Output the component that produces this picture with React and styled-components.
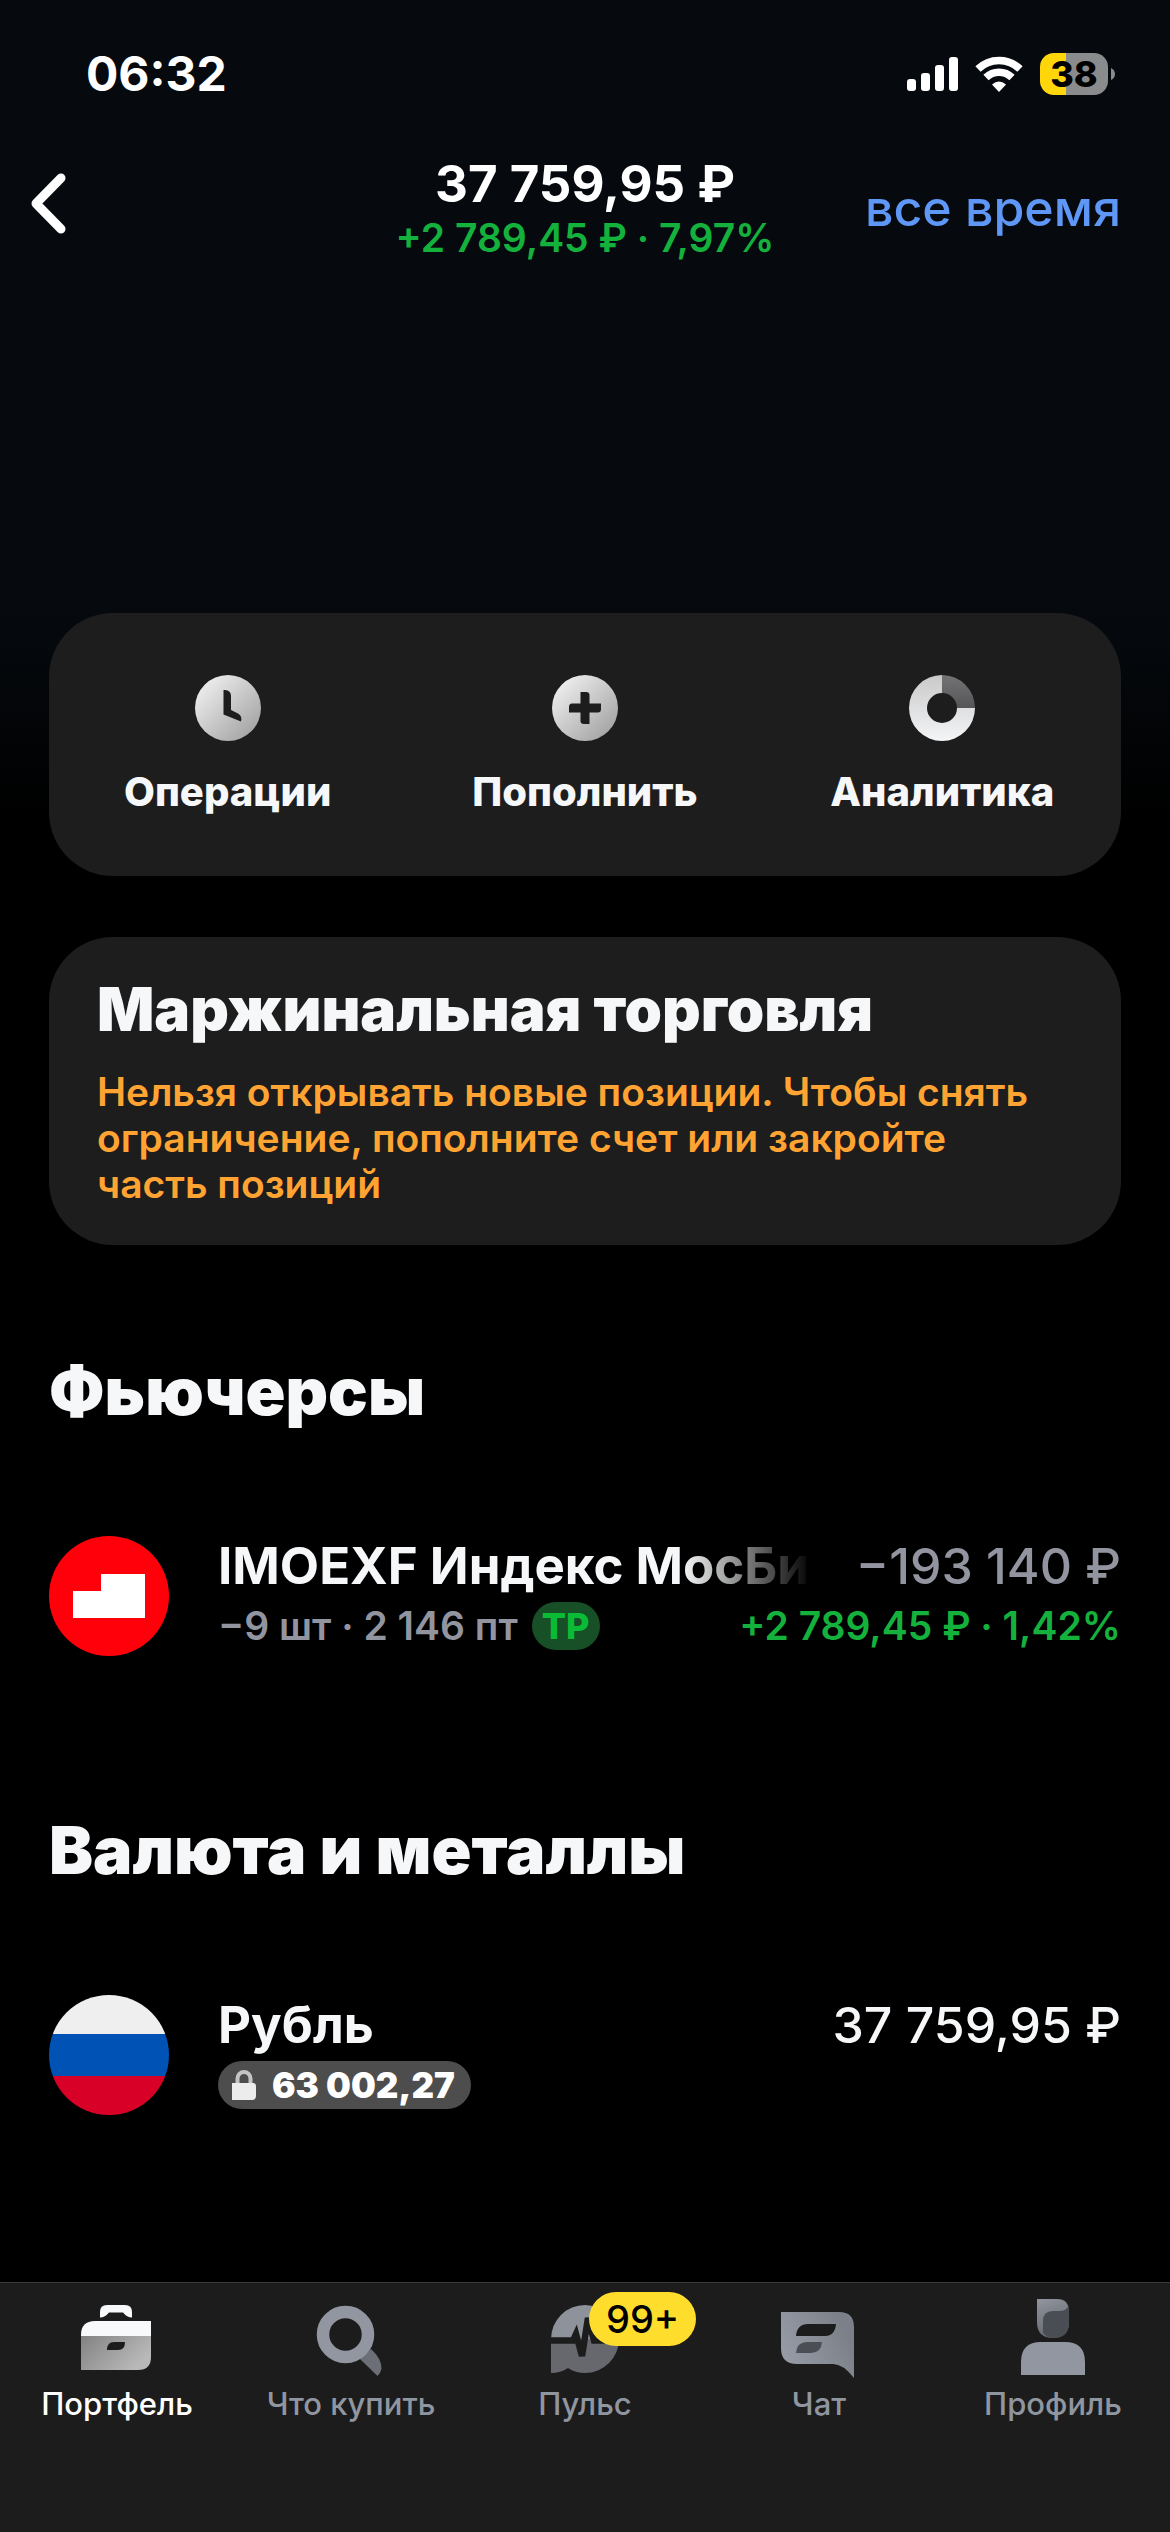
import React from 'react'
import styled, { createGlobalStyle } from 'styled-components'

const GlobalStyle = createGlobalStyle`
  * {
    box-sizing: border-box;
  }

  body {
    margin: 0;
    background: #000;
    color: #f6f7f8;
    font-family: Inter, 'Noto Sans', sans-serif;
  }

  h1, h2, p {
    margin: 0;
  }

  button {
    border: 0;
    padding: 0;
    background: none;
    color: inherit;
    font: inherit;
    cursor: pointer;
  }

  svg {
    display: block;
    flex: none;
  }
`

const Screen = styled.div`
  display: flex;
  flex-direction: column;
  min-height: 100vh;
  background: linear-gradient(#060a0f 0, #060a0f 600px, #000 820px);
`

const StatusBar = styled.div`
  display: flex;
  align-items: center;
  justify-content: space-between;
  height: 148px;
  padding: 0 55px 0 86px;
  color: #fff;
`

const Clock = styled.time`
  font-size: 48px;
  line-height: 56px;
  font-weight: 700;
`

const Indicators = styled.div`
  display: flex;
  align-items: center;
  gap: 17px;
`

const Battery = styled.div`
  display: flex;
  align-items: center;
  gap: 3px;
`

const BatteryBody = styled.div`
  width: 68px;
  border-radius: 14px;
  background: linear-gradient(90deg, #ffd60a ${props => props.$level}%, #8a8b8d ${props => props.$level}%);
  color: #000;
  font-size: 36px;
  line-height: 42px;
  font-weight: 800;
  text-align: center;
`

const Header = styled.header`
  display: grid;
  grid-template-columns: 1fr auto 1fr;
  align-items: center;
  padding: 6px 49px 0 26px;
`

const BackButton = styled.button`
  justify-self: start;
  padding-bottom: 10px;
`

const Total = styled.div`
  padding-left: 23px;
  text-align: center;
`

const TotalValue = styled.h1`
  color: #fff;
  font-size: 51px;
  line-height: 60px;
  font-weight: 700;
`

const TotalChange = styled.p`
  color: #14b23c;
  font-size: 39px;
  line-height: 48px;
  font-weight: 600;
`

const PeriodButton = styled.button`
  justify-self: end;
  color: #5e97f5;
  font-size: 50px;
  font-weight: 500;
`

const Content = styled.main`
  display: flex;
  flex-direction: column;
  padding: 351px 49px 0;
`

const Card = styled.section`
  border-radius: 64px;
  background: #1d1d1e;
`

const Actions = styled(Card)`
  display: grid;
  grid-template-columns: repeat(3, 1fr);
`

const Action = styled.button`
  display: flex;
  flex-direction: column;
  align-items: center;
  gap: 27px;
  padding: 62px 0 60px;
  font-size: 40px;
  line-height: 48px;
  font-weight: 800;
`

const Notice = styled(Card)`
  margin-top: 61px;
  padding: 38px 64px 38px 48px;
`

const NoticeTitle = styled.h2`
  font-size: 60px;
  line-height: 68px;
  font-weight: 900;
`

const NoticeText = styled.p`
  margin-top: 26px;
  color: #ffa432;
  font-size: 39px;
  line-height: 46px;
  font-weight: 600;
`

const Section = styled.section`
  margin-top: ${props => props.$top}px;
`

const SectionTitle = styled.h2`
  font-size: 66px;
  line-height: 78px;
  font-weight: 900;
`

const Position = styled.div`
  display: flex;
  gap: 49px;
  margin-top: 106px;
`

const PositionInfo = styled.div`
  display: flex;
  flex: 1;
  flex-direction: column;
  gap: 6px;
  min-width: 0;
`

const Line = styled.div`
  display: flex;
  align-items: center;
  justify-content: space-between;
  white-space: nowrap;
`

const Name = styled.span`
  flex: 1;
  min-width: 0;
  overflow: hidden;
  margin-right: 44px;
  font-size: 51px;
  line-height: 60px;
  font-weight: 700;
  mask-image: ${props => props.$fade ? 'linear-gradient(90deg, #000 calc(100% - 130px), transparent)' : 'none'};
`

const Amount = styled.span`
  color: ${props => props.$muted ? '#9295a0' : '#f6f7f8'};
  font-size: 50px;
  line-height: 60px;
  font-weight: 500;
`

const Details = styled.span`
  display: flex;
  align-items: center;
  gap: 14px;
  color: #9295a0;
  font-size: 39px;
  line-height: 48px;
  font-weight: 600;
`

const Change = styled(Details)`
  color: #14b23c;
`

const Tag = styled.span`
  padding: 0 10px;
  border-radius: 24px;
  background: #174f27;
  color: #0abb35;
  font-size: 36px;
  line-height: 48px;
  font-weight: 800;
`

const Blocked = styled.span`
  display: flex;
  align-items: center;
  gap: 16px;
  padding: 0 16px 0 14px;
  border-radius: 24px;
  background: #4d4d4e;
  color: #fff;
  font-size: 35px;
  line-height: 48px;
  font-weight: 900;
`

const TabBar = styled.nav`
  display: grid;
  grid-template-columns: repeat(5, 1fr);
  margin-top: auto;
  padding: 13px 0 110px;
  border-top: 1px solid #39393b;
  background: #1c1c1d;
`

const Tab = styled.a`
  display: flex;
  flex-direction: column;
  align-items: center;
  gap: 6px;
  color: ${props => props.$active ? '#fff' : '#9096a0'};
  font-size: 31px;
  line-height: 36px;
  font-weight: 500;
  text-decoration: none;
`

const TabIcon = styled.span`
  position: relative;
`

const Badge = styled.span`
  position: absolute;
  top: -4px;
  left: 46px;
  padding: 0 17px;
  border-radius: 27px;
  background: #ffdd2d;
  color: #000;
  font-size: 38px;
  line-height: 54px;
  font-weight: 500;
`

const Signal = () => (
  <svg width="51" height="34" viewBox="0 0 51 34" fill="#fff" aria-hidden="true">
    <rect x="0" y="22" width="9" height="12" rx="3" />
    <rect x="14" y="16" width="9" height="18" rx="3" />
    <rect x="28" y="8" width="9" height="26" rx="3" />
    <rect x="42" y="0" width="9" height="34" rx="3" />
  </svg>
)

const Wifi = () => (
  <svg width="48" height="36" viewBox="0 0 48 36" aria-hidden="true">
    <g fill="none" stroke="#fff" strokeWidth="7.5">
      <path d="M3 13 A30 30 0 0 1 45 13" />
      <path d="M11 21.500 A18.500 18.500 0 0 1 37 21.500" />
    </g>
    <path d="M24 36 L17 28.500 Q24 22.500 31 28.500 Z" fill="#fff" />
  </svg>
)

const BatteryNub = () => (
  <svg width="4" height="12" viewBox="0 0 4 12" aria-hidden="true">
    <path d="M0 0 Q4 2 4 6 Q4 10 0 12 Z" fill="#8a8b8d" />
  </svg>
)

const Chevron = () => (
  <svg width="44" height="66" viewBox="0 0 44 66" aria-hidden="true">
    <path d="M35 8 L10 33.500 L35 59" fill="none" stroke="#fff" strokeWidth="9" strokeLinecap="round" strokeLinejoin="round" />
  </svg>
)

const Silver = ({ id }) => (
  <linearGradient id={id} x1="0" y1="0" x2="1" y2="1">
    <stop offset="0.1" stopColor="#efeff0" />
    <stop offset="0.9" stopColor="#a3a3a4" />
  </linearGradient>
)

const ClockIcon = () => (
  <svg width="66" height="66" viewBox="0 0 66 66" aria-hidden="true">
    <defs><Silver id="silver-clock" /></defs>
    <circle cx="33" cy="33" r="33" fill="url(#silver-clock)" />
    <path d="M28.500 15 H30 Q36 15.500 36 21 V35 L43 38.500 Q47.500 41 46 46.500 L28.500 39.500 Z" fill="#1d1d1e" />
  </svg>
)

const PlusIcon = () => (
  <svg width="66" height="66" viewBox="0 0 66 66" aria-hidden="true">
    <defs><Silver id="silver-plus" /></defs>
    <circle cx="33" cy="33" r="33" fill="url(#silver-plus)" />
    <path d="M28.500 17 H34 Q37.500 17 37.500 20 V28.500 H49 V34 Q49 37.500 46 37.500 H37.500 V49 H32 Q28.500 49 28.500 46 V37.500 H17 V32 Q17 28.500 20 28.500 H28.500 Z" fill="#1d1d1e" />
  </svg>
)

const DonutIcon = () => (
  <svg width="66" height="66" viewBox="0 0 66 66" aria-hidden="true">
    <defs>
      <linearGradient id="donut-main" x1="0" y1="0" x2="0" y2="1">
        <stop offset="0" stopColor="#c9c9ca" />
        <stop offset="1" stopColor="#f4f5f6" />
      </linearGradient>
      <linearGradient id="donut-rest" x1="0" y1="0" x2="0" y2="1">
        <stop offset="0" stopColor="#747476" />
        <stop offset="1" stopColor="#555557" />
      </linearGradient>
    </defs>
    <path d="M33 0 A33 33 0 1 0 66 33 H48 A15 15 0 1 1 33 18 Z" fill="url(#donut-main)" />
    <path d="M33 0 A33 33 0 0 1 66 33 H48 A15 15 0 0 0 33 18 Z" fill="url(#donut-rest)" />
  </svg>
)

const MoexLogo = () => (
  <svg width="120" height="120" viewBox="0 0 120 120" aria-hidden="true">
    <circle cx="60" cy="60" r="60" fill="#ff000b" />
    <path d="M24 55 H52 V38 H96 V82 H24 Z" fill="#fff" />
  </svg>
)

const RussiaFlag = () => (
  <svg width="120" height="120" viewBox="0 0 120 120" aria-hidden="true">
    <clipPath id="flag-circle"><circle cx="60" cy="60" r="60" /></clipPath>
    <g clipPath="url(#flag-circle)">
      <rect width="120" height="39" fill="#efefef" />
      <rect y="39" width="120" height="42" fill="#0052b4" />
      <rect y="81" width="120" height="39" fill="#d80027" />
    </g>
  </svg>
)

const LockIcon = () => (
  <svg width="24" height="30" viewBox="0 0 24 30" aria-hidden="true">
    <path d="M5.500 14 V8.500 A6.500 6.500 0 0 1 18.500 8.500 V14" fill="none" stroke="#c4c4c5" strokeWidth="4" />
    <path d="M0 13 H21 Q24 13 24 16 V26 Q24 30 20 30 H0 Z" fill="#ececed" />
  </svg>
)

const PortfolioIcon = () => (
  <svg width="84" height="84" viewBox="0 0 84 84" aria-hidden="true">
    <defs>
      <linearGradient id="case-front" x1="0" y1="0" x2="1" y2="0.5">
        <stop offset="0" stopColor="#828283" />
        <stop offset="1" stopColor="#b9b9ba" />
      </linearGradient>
    </defs>
    <path d="M25 21.500 V16 Q25 9 32 9 H50 Q57 9 57 16 V21.500 Q52 21.500 48 16.500 H34 Q30 21.500 25 21.500 Z" fill="#f8f9fa" />
    <path d="M6 41 V39 Q6 25 20 25 H76 V41 Z" fill="#f8f9fa" />
    <path d="M6 40 H76 V61 Q76 74 63 74 H6 Z" fill="url(#case-front)" />
    <path d="M32 54 Q32 46 39 46 H50 Q50 54 43 54 Z" fill="#1c1c1d" />
  </svg>
)

const SearchIcon = () => (
  <svg width="84" height="84" viewBox="0 0 84 84" aria-hidden="true">
    <path d="M51 63 L62 53 Q73 63 72.500 73 Q71 78 68.500 80 Z" fill="#6c6f76" />
    <circle cx="36.500" cy="38.500" r="22.500" fill="none" stroke="#9196a1" strokeWidth="12.500" />
  </svg>
)

const PulseIcon = () => (
  <svg width="84" height="84" viewBox="0 0 84 84" aria-hidden="true">
    <path d="M8 43 A34 34 0 0 1 76 43 Z" fill="#8d929b" />
    <path d="M8 43 H76 A34 34 0 0 1 42 77 Q32 77 25 72 Q18 77 8 77 Z" fill="#66686e" />
    <path d="M7 44.500 H30 L33 38 L39 60 L45 22 L51 44.500 H77" fill="none" stroke="#1c1c1d" strokeWidth="6.500" />
  </svg>
)

const ChatIcon = () => (
  <svg width="84" height="84" viewBox="0 0 84 84" aria-hidden="true">
    <defs>
      <linearGradient id="bubble" x1="0" y1="1" x2="1" y2="0.6">
        <stop offset="0" stopColor="#9aa0ab" />
        <stop offset="1" stopColor="#7c8189" />
      </linearGradient>
    </defs>
    <path d="M4 16 H62 Q77 16 77 31 V82 Q66 68 56 68 H20 Q4 68 4 52 Z" fill="url(#bubble)" />
    <path d="M19 40 Q20 28 31 28 H59 Q58 40 48 40 Z" fill="#1c1c1d" />
    <path d="M19 57 Q20 46 30 46 H45 Q44 57 34 57 Z" fill="#4b4e54" />
  </svg>
)

const ProfileIcon = () => (
  <svg width="84" height="84" viewBox="0 0 84 84" aria-hidden="true">
    <defs>
      <linearGradient id="hair" x1="0.3" y1="0" x2="0.6" y2="1">
        <stop offset="0" stopColor="#8d929b" />
        <stop offset="1" stopColor="#62656b" />
      </linearGradient>
    </defs>
    <path d="M26 3 H46 Q58 3 58 16 V26 Q58 42 42 42 Q26 42 26 26 Z" fill="url(#hair)" />
    <path d="M57.500 10 Q55 15 49 15 H42 Q32 15 32 25 V37 Q36 42 42 42 Q58 42 58 26 V14 Z" fill="#4a4d53" />
    <path d="M10 79 V66 Q10 46 30 46 H54 Q74 46 74 66 V79 Z" fill="#9196a1" />
  </svg>
)

const actions = [
  { label: 'Операции', Icon: ClockIcon },
  { label: 'Пополнить', Icon: PlusIcon },
  { label: 'Аналитика', Icon: DonutIcon },
]

const tabs = [
  { label: 'Портфель', Icon: PortfolioIcon, active: true },
  { label: 'Что купить', Icon: SearchIcon },
  { label: 'Пульс', Icon: PulseIcon, badge: '99+' },
  { label: 'Чат', Icon: ChatIcon },
  { label: 'Профиль', Icon: ProfileIcon },
]

function App() {
  return (
    <Screen>
      <GlobalStyle />
      <StatusBar>
        <Clock>06:32</Clock>
        <Indicators>
          <Signal />
          <Wifi />
          <Battery>
            <BatteryBody $level={38}>38</BatteryBody>
            <BatteryNub />
          </Battery>
        </Indicators>
      </StatusBar>

      <Header>
        <BackButton aria-label="Назад"><Chevron /></BackButton>
        <Total>
          <TotalValue>37 759,95 ₽</TotalValue>
          <TotalChange>+2 789,45 ₽ · 7,97%</TotalChange>
        </Total>
        <PeriodButton>все время</PeriodButton>
      </Header>

      <Content>
        <Actions>
          {actions.map(({ label, Icon }) => (
            <Action key={label}>
              <Icon />
              {label}
            </Action>
          ))}
        </Actions>

        <Notice>
          <NoticeTitle>Маржинальная торговля</NoticeTitle>
          <NoticeText>
            Нельзя открывать новые позиции. Чтобы снять ограничение, пополните счет или закройте часть позиций
          </NoticeText>
        </Notice>

        <Section $top={107}>
          <SectionTitle>Фьючерсы</SectionTitle>
          <Position>
            <MoexLogo />
            <PositionInfo>
              <Line>
                <Name $fade>IMOEXF Индекс МосБи</Name>
                <Amount $muted>−193 140 ₽</Amount>
              </Line>
              <Line>
                <Details>
                  −9 шт · 2 146 пт
                  <Tag>TP</Tag>
                </Details>
                <Change>+2 789,45 ₽ · 1,42%</Change>
              </Line>
            </PositionInfo>
          </Position>
        </Section>

        <Section $top={155}>
          <SectionTitle>Валюта и металлы</SectionTitle>
          <Position>
            <RussiaFlag />
            <PositionInfo>
              <Line>
                <Name>Рубль</Name>
                <Amount>37 759,95 ₽</Amount>
              </Line>
              <Line>
                <Blocked>
                  <LockIcon />
                  63 002,27
                </Blocked>
              </Line>
            </PositionInfo>
          </Position>
        </Section>
      </Content>

      <TabBar>
        {tabs.map(({ label, Icon, active, badge }) => (
          <Tab key={label} href="#" $active={active}>
            <TabIcon>
              <Icon />
              {badge && <Badge>{badge}</Badge>}
            </TabIcon>
            {label}
          </Tab>
        ))}
      </TabBar>
    </Screen>
  )
}

export default App
